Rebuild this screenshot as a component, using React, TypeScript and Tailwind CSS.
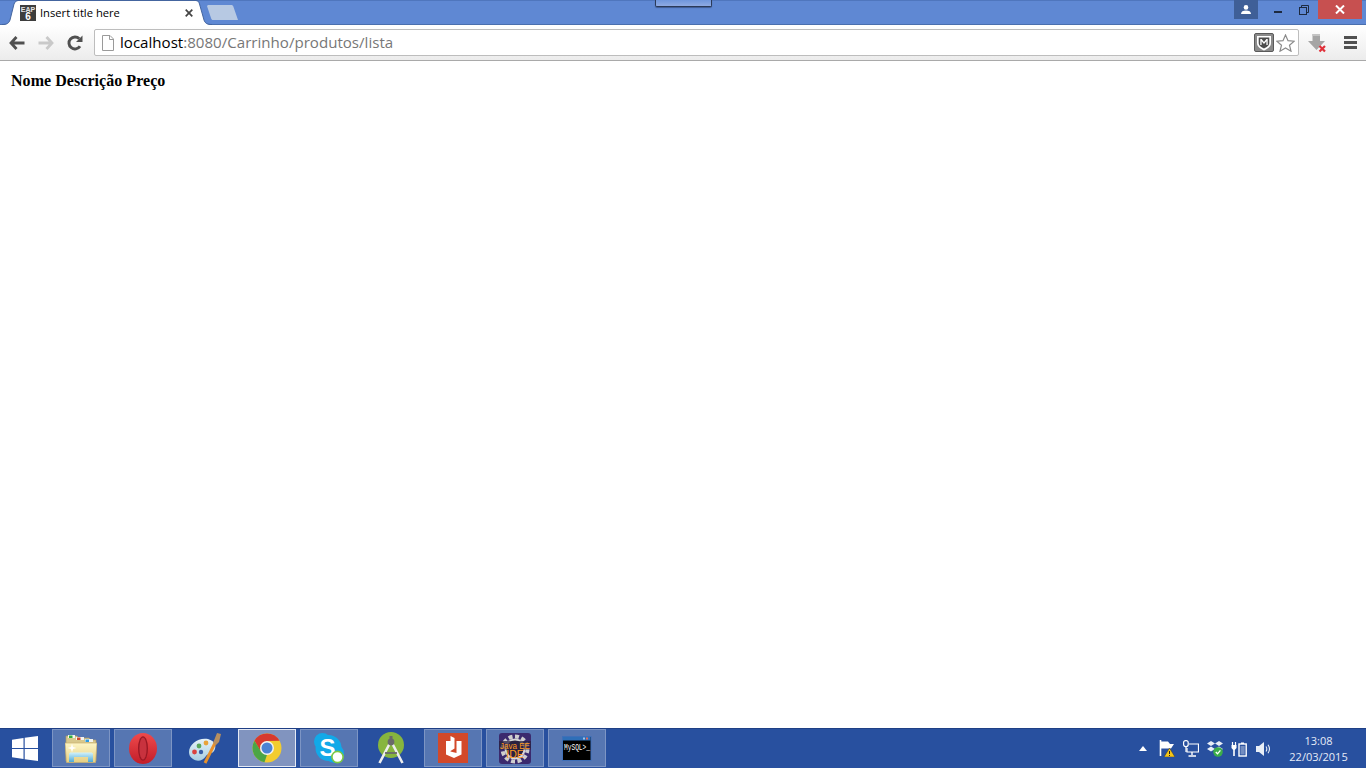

import React from "react";

const ui = { fontFamily: '"Open Sans", "Liberation Sans", sans-serif' };

function TabLeft() {
  return (
    <svg width="18" height="25" viewBox="0 0 18 25" className="shrink-0 block">
      <path d="M2 25 C7 25 9 23 10 20 L14 4 C15 2 16 1 18 1 V25 Z" fill="#ffffff" />
      <path d="M2 24.5 C7 24.5 9 23 10 20 L14 4 C15 2 16 .5 18 .5" fill="none" stroke="#44659f" />
    </svg>
  );
}
function TabRight() {
  return (
    <svg width="16" height="25" viewBox="0 0 16 25" className="shrink-0 block">
      <path d="M0 1 C2 1 3 2 3.5 4 L8 20 C9 23 11 25 16 25 H0 Z" fill="#ffffff" />
      <path d="M0 .5 C2 .5 3 2 3.5 4 L8 20 C9 23 11 24.5 16 24.5" fill="none" stroke="#44659f" />
    </svg>
  );
}
function Favicon() {
  return (
    <svg width="16" height="16" viewBox="0 0 16 16" className="shrink-0 block">
      <rect width="16" height="16" fill="#3d3d3d" />
      <text x="8" y="6.5" fontSize="7" fontWeight="700" fill="#e2e2e2" textAnchor="middle" fontFamily="Liberation Sans, sans-serif">EAP</text>
      <text x="8" y="15.2" fontSize="10" fontWeight="700" fill="#ffffff" textAnchor="middle" fontFamily="Liberation Sans, sans-serif">6</text>
    </svg>
  );
}
function NewTab() {
  return (
    <svg width="31" height="15" viewBox="0 0 31 15" className="shrink-0 block">
      <path d="M1 0 H24 C25.5 0 26 .5 26.5 2 L31 15 H6 C5 15 4.5 14.5 4 13 L0 1 Z" fill="#b7c9e3" />
    </svg>
  );
}
function Back({ color }: { color: string }) {
  return (
    <svg width="16" height="14" viewBox="0 0 16 14" className="block">
      <path d="M7.5 1 L2 7 L7.5 13 M2.5 7 H15.5" fill="none" stroke={color} strokeWidth="2.8" />
    </svg>
  );
}
function Forward({ color }: { color: string }) {
  return (
    <svg width="16" height="14" viewBox="0 0 16 14" className="block">
      <path d="M8.5 1 L14 7 L8.5 13 M13.5 7 H0.5" fill="none" stroke={color} strokeWidth="2.8" />
    </svg>
  );
}
function Reload() {
  return (
    <svg width="16" height="16" viewBox="0 0 16 16" className="block">
      <path d="M13 11.2 A6 6 0 1 1 12.3 3.8" fill="none" stroke="#505050" strokeWidth="2.9" />
      <path d="M9 7 H15.5 V0.5 Z" fill="#505050" />
    </svg>
  );
}
function PageIcon() {
  return (
    <svg width="12" height="16" viewBox="0 0 12 16" className="block">
      <path d="M.5 .5 H8 L11.5 4 V15.5 H.5 Z" fill="#ffffff" stroke="#9a9a9a" />
      <path d="M7.5 .5 V4.5 H11.5" fill="none" stroke="#9a9a9a" />
    </svg>
  );
}
function McAfee() {
  return (
    <svg width="20" height="19" viewBox="0 0 20 19" className="block">
      <rect x=".5" y=".5" width="19" height="18" rx="1.5" fill="#8a8a8a" stroke="#5a5a5a" />
      <path d="M3 3 H17 V10 C17 14 13 16 10 17.5 C7 16 3 14 3 10 Z" fill="#ffffff" />
      <path d="M4.7 4.5 H15.3 V10 C15.3 12.8 12.5 14.2 10 15.6 C7.5 14.2 4.7 12.8 4.7 10 Z" fill="#4d4d4d" />
      <path d="M6.3 12 V6 H7.6 L10 9 L12.4 6 H13.7 V12 H12.4 V8.2 L10 11 L7.6 8.2 V12 Z" fill="#ffffff" />
    </svg>
  );
}
function Star() {
  return (
    <svg width="19" height="18" viewBox="0 0 19 18" className="block">
      <path d="M9.5 1 L12 6.7 L18.2 7.2 L13.5 11.2 L15 17.2 L9.5 14 L4 17.2 L5.5 11.2 L.8 7.2 L7 6.7 Z" fill="#ffffff" stroke="#8a8a8a" strokeWidth="1.2" />
    </svg>
  );
}
function DownloadX() {
  return (
    <svg width="20" height="20" viewBox="0 0 20 20" className="block">
      <path d="M5.5 1 H13 V8 H18 L9.5 17 L1 8 H5.5 Z" fill="#a5a5a5" />
      <path d="M5.5 1 H13 V3 H5.5 Z" fill="#c4c4c4" />
      <path d="M12.5 13 L18 18.5 M18 13 L12.5 18.5" stroke="#e0303a" strokeWidth="2.2" />
    </svg>
  );
}
function Menu() {
  return (
    <div className="flex flex-col gap-[2px] w-[13px]">
      <div className="h-[3px] bg-[#505050]" />
      <div className="h-[3px] bg-[#505050]" />
      <div className="h-[3px] bg-[#505050]" />
    </div>
  );
}

function WinLogo() {
  return (
    <svg width="26" height="25" viewBox="0 0 26 25" className="block">
      <path d="M0 3.7 L11.5 2 V12 H0 Z M12.7 1.8 L26 0 V12 H12.7 Z M0 13 H11.5 V23 L0 21.3 Z M12.7 13 H26 V25 L12.7 23.2 Z" fill="#ffffff" />
    </svg>
  );
}
function FolderIcon() {
  return (
    <svg width="32" height="29" viewBox="0 0 32 29" className="block">
      <defs>
        <linearGradient id="fold" x1="0" y1="0" x2="0" y2="1">
          <stop offset="0" stopColor="#fdf6c6" />
          <stop offset="1" stopColor="#e6cf83" />
        </linearGradient>
        <linearGradient id="arch" x1="0" y1="0" x2="0" y2="1">
          <stop offset="0" stopColor="#d2f2fb" />
          <stop offset="1" stopColor="#4fa9d6" />
        </linearGradient>
      </defs>
      <path d="M1 2 H12 L14 4 H24 L26 6 H31 V27 H1 Z" fill="#d8c88c" stroke="#a9986a" strokeWidth=".7" />
      <rect x="3" y="1" width="7" height="3" fill="#f4f4f0" />
      <rect x="4" y="1.5" width="3.5" height="2.5" fill="#2fae3f" />
      <rect x="11" y="3" width="8" height="3" fill="#f4f4f0" />
      <rect x="12" y="3.5" width="3.5" height="2.5" fill="#d04a2c" />
      <rect x="20" y="5" width="8" height="3" fill="#f4f4f0" />
      <rect x="20.5" y="5.5" width="3.5" height="2.5" fill="#2f9be0" />
      <path d="M0 9 H32 L30.5 28.5 H1.5 Z" fill="url(#fold)" stroke="#c9b070" strokeWidth=".7" />
      <path d="M4 28 V20 C4 19 5 18.5 6 18.5 H26 C27 18.5 28 19 28 20 V28 H23 V23 H9 V28 Z" fill="url(#arch)" />
      <path d="M7 9.5 L8 13 L11.5 14 L8 15 L7 18.5 L6 15 L2.5 14 L6 13 Z" fill="#ffffff" />
    </svg>
  );
}
function OperaIcon() {
  return (
    <svg width="28" height="31" viewBox="0 0 28 31" className="block">
      <defs>
        <linearGradient id="op" x1="0" y1="0" x2="0" y2="1">
          <stop offset="0" stopColor="#ef4a4c" />
          <stop offset="1" stopColor="#c21d29" />
        </linearGradient>
      </defs>
      <ellipse cx="14" cy="15.5" rx="14" ry="15.5" fill="url(#op)" />
      <ellipse cx="14" cy="15.5" rx="5" ry="12.2" fill="#9a1824" />
      <ellipse cx="14" cy="15.5" rx="3.6" ry="11" fill="#c8323e" />
    </svg>
  );
}
function PaintIcon() {
  return (
    <svg width="34" height="32" viewBox="0 0 34 32" className="block">
      <defs>
        <linearGradient id="pal" x1="0" y1="0" x2="0" y2="1">
          <stop offset="0" stopColor="#e6f2f8" />
          <stop offset="1" stopColor="#a9cfe2" />
        </linearGradient>
      </defs>
      <path d="M1 20 C1 12 11 5 20 7 C27 9 29 14 26 19 C24 22 20 21 18 24 C15 29 9 30 5 27 C2 25 1 23 1 20 Z" fill="url(#pal)" />
      <circle cx="6.5" cy="20" r="2.4" fill="#d9433f" />
      <circle cx="11" cy="14" r="2.4" fill="#58a75a" />
      <circle cx="18" cy="11" r="2.4" fill="#e8a33a" />
      <circle cx="13" cy="20" r="2.2" fill="#3a5fa8" />
      <path d="M17 31 L28 9" stroke="#e8912c" strokeWidth="3" />
      <path d="M25 11 L29 1 L33 2 L31 10 L28 13 Z" fill="#b88f5f" />
    </svg>
  );
}
function ChromeIcon() {
  return (
    <svg width="30" height="30" viewBox="0 0 30 30" className="block">
      <circle cx="15" cy="15" r="14.5" fill="#f2cc2f" />
      <path d="M2.44 7.75 A14.5 14.5 0 0 1 27.56 7.75 L15 8 L8.5 12 L8.7 18.6 Z" fill="#d7392f" />
      <path d="M2.44 7.75 L9 18.5 L15 21.8 L12.5 29.3 A14.5 14.5 0 0 1 2.44 7.75 Z" fill="#4ba546" />
      <circle cx="15" cy="15" r="7" fill="#f2f2f2" />
      <circle cx="15" cy="15" r="5.5" fill="#4a83d4" />
    </svg>
  );
}
function SkypeIcon() {
  return (
    <svg width="30" height="31" viewBox="0 0 30 31" className="block">
      <circle cx="8.5" cy="8.5" r="8.5" fill="#12a9e8" />
      <circle cx="20.5" cy="20.5" r="9.5" fill="#12a9e8" />
      <circle cx="14.5" cy="15" r="13" fill="#12a9e8" />
      <text x="13.5" y="23" fontSize="24" fontWeight="700" textAnchor="middle" fill="#ffffff" fontFamily="Liberation Sans, sans-serif">S</text>
      <circle cx="23.5" cy="24" r="5.6" fill="#ffffff" stroke="#7ac943" strokeWidth="1.6" />
    </svg>
  );
}
function AndroidIcon() {
  return (
    <svg width="28" height="32" viewBox="0 0 28 32" className="block">
      <circle cx="14" cy="13" r="13" fill="#87b53e" />
      <path d="M13 11 L2.5 31 M15 11 L25.5 31" stroke="#eeeeee" strokeWidth="2.6" />
      <path d="M8 21 H20" stroke="#6a6a6a" strokeWidth="1.8" />
      <circle cx="14" cy="10" r="3.4" fill="#6a6a6a" />
      <rect x="12.5" y="4" width="3" height="4" fill="#6a6a6a" />
    </svg>
  );
}
function OfficeLensIcon() {
  return (
    <svg width="30" height="30" viewBox="0 0 30 30" className="block">
      <rect width="30" height="30" fill="#d2492a" />
      <path d="M8 8 H12.5 V3 L16.5 5 V15.5 L12.5 18 V18.5 L18.5 20 V8 H23.5 V21.5 L16 25 L8 21.5 Z" fill="#ffffff" />
    </svg>
  );
}
function EclipseIcon() {
  return (
    <svg width="32" height="31" viewBox="0 0 32 31" className="block overflow-visible">
      <rect width="32" height="31" rx="3" fill="#3b2a6e" />
      <circle cx="16" cy="16" r="12.5" fill="none" stroke="#cfcfcf" strokeWidth="4" strokeDasharray="4 2.5" />
      <circle cx="16" cy="16" r="9.5" fill="#2a2240" stroke="#d8d8d8" strokeWidth="2" />
      <rect x="0" y="8" width="32" height="8.5" fill="#2a2240" opacity=".75" />
      <text x="1" y="15.5" fontSize="9.5" textLength="30" lengthAdjust="spacingAndGlyphs" fill="#ff9a1f" fontFamily="Liberation Sans, sans-serif">Java EE</text>
      <text x="16" y="25" fontSize="10.5" textAnchor="middle" fill="#ff9a1f" fontFamily="Liberation Sans, sans-serif">IDE</text>
    </svg>
  );
}
function MysqlIcon() {
  return (
    <svg width="30" height="25" viewBox="0 0 30 25" className="block overflow-visible">
      <rect x=".5" y=".5" width="28.5" height="24" fill="#000000" stroke="#3f6fb8" />
      <rect x="1" y="1" width="27.5" height="3.5" fill="#2f6fb8" />
      <rect x="21" y="1.5" width="2" height="2" fill="#9cc4ea" />
      <rect x="24" y="1.5" width="2" height="2" fill="#e26a5a" />
      <text x="2" y="14" fontSize="9" textLength="26" lengthAdjust="spacingAndGlyphs" fill="#ffffff" fontFamily="Liberation Mono, monospace">MySQL&gt;_</text>
    </svg>
  );
}

function TaskButton({ active, plain, children }: { active?: boolean; plain?: boolean; children: React.ReactNode }) {
  const cls = plain
    ? "w-[58px] h-[38px] flex items-center justify-center"
    : active
      ? "w-[58px] h-[38px] flex items-center justify-center border border-[#e4e9f4] bg-[#8194bf]"
      : "w-[58px] h-[38px] flex items-center justify-center border border-[#7d95c4] bg-[#5676b2]";
  return <div className={cls}>{children}</div>;
}

function TrayArrow() {
  return (
    <svg width="8" height="5" viewBox="0 0 8 5" className="block">
      <path d="M4 0 L8 5 H0 Z" fill="#ffffff" />
    </svg>
  );
}
function TrayFlag() {
  return (
    <svg width="16" height="17" viewBox="0 0 16 17" className="block">
      <path d="M1.5 0 V16" fill="none" stroke="#ffffff" strokeWidth="1.6" />
      <path d="M2 1.5 H9 L11 4 H15 L12 8.5 H2 Z" fill="#ffffff" />
      <path d="M10.5 8 L16 17 H5 Z" fill="#f5c518" stroke="#333" strokeWidth=".5" />
      <path d="M10.5 11 V14 M10.5 15 V16" stroke="#222" strokeWidth="1" />
    </svg>
  );
}
function TrayNetwork() {
  return (
    <svg width="16" height="17" viewBox="0 0 16 17" className="block">
      <path d="M6 4 H15.5 V12 H4 V8" fill="none" stroke="#ffffff" strokeWidth="1.2" />
      <path d="M9 12 V15 M5.5 16 H13" stroke="#ffffff" strokeWidth="1.4" />
      <rect x=".6" y=".6" width="4.6" height="6" rx="2" fill="none" stroke="#ffffff" strokeWidth="1.2" />
      <path d="M3 7 V12" stroke="#ffffff" strokeWidth="1.2" />
    </svg>
  );
}
function TrayDropbox() {
  return (
    <svg width="16" height="17" viewBox="0 0 16 17" className="block">
      <path d="M4 1 L8 3.5 L4 6 L0 3.5 Z M12 1 L16 3.5 L12 6 L8 3.5 Z M4 6.5 L8 9 L4 11.5 L0 9 Z M12 6.5 L16 9 L12 11.5 L8 9 Z" fill="#e8eef7" />
      <circle cx="11" cy="12" r="4.8" fill="#3cae4a" />
      <path d="M8.8 12 L10.5 13.8 L13.4 10.4" fill="none" stroke="#ffffff" strokeWidth="1.3" />
    </svg>
  );
}
function TrayBattery() {
  return (
    <svg width="16" height="16" viewBox="0 0 16 16" className="block">
      <path d="M1.5 1 V4 M4.5 1 V4" stroke="#ffffff" strokeWidth="1.2" />
      <path d="M.5 4 H5.5 V7 L3.8 9 V15 H2.2 V9 L.5 7 Z" fill="#ffffff" />
      <rect x="8" y="3" width="7.2" height="12" fill="none" stroke="#ffffff" strokeWidth="1.4" />
      <rect x="10" y="1.5" width="3" height="1.5" fill="#ffffff" />
      <rect x="9.5" y="5" width="4.2" height="8.5" fill="#ffffff" opacity=".35" />
    </svg>
  );
}
function TraySpeaker() {
  return (
    <svg width="16" height="16" viewBox="0 0 16 16" className="block">
      <path d="M1 5 H4 L9 1 V15 L4 11 H1 Z" fill="#e8eef7" />
      <path d="M11 5.5 C12 7 12 9 11 10.5 M13 3.8 C14.7 6.2 14.7 9.8 13 12.2" fill="none" stroke="#e8eef7" strokeWidth="1.1" />
    </svg>
  );
}

export default function App() {
  return (
    <div className="h-[768px] w-[1366px] flex flex-col overflow-hidden bg-white">
      {/* title bar */}
      <div className="relative h-[25px] shrink-0 bg-[#5f88d3] flex items-stretch border-t border-b border-t-[#4f76bd] border-b-[#4a6fae]">
        <div className="flex items-stretch -my-px">
          <TabLeft />
          <div className="w-[178px] bg-white border-t border-[#44659f] flex items-center">
            <div className="ml-[2px]"><Favicon /></div>
            <span className="ml-1 text-[11.2px] leading-none text-black whitespace-nowrap" style={ui}>Insert title here</span>
            <span className="ml-auto mr-[3px]">
              <svg width="8" height="8" viewBox="0 0 8 8" className="block"><path d="M.7 .7 L7.3 7.3 M7.3 .7 L.7 7.3" stroke="#444" strokeWidth="1.7" /></svg>
            </span>
          </div>
          <TabRight />
          <div className="self-start mt-[5px] -ml-[5px]"><NewTab /></div>
        </div>
        <div className="absolute left-[655px] top-[-1px] w-[57px] h-[7px] bg-gradient-to-b from-[#6f96dc] to-[#8eaae3] border-x border-b border-[#2b3a58] rounded-b-[2px] shadow-[0_1px_1px_rgba(30,45,80,0.5)]" />
        <div className="ml-auto flex items-start -mt-px">
          <div className="w-[24px] h-[19px] bg-[#3f5f97] flex items-center justify-center">
            <svg width="10" height="9" viewBox="0 0 10 9" className="block"><circle cx="5" cy="2.4" r="2.3" fill="#fff" /><path d="M0 9 C0 6.5 2 5.5 5 5.5 C8 5.5 10 6.5 10 9 Z" fill="#fff" /></svg>
          </div>
          <div className="w-[7px]" />
          <div className="w-[26px] h-[19px] flex items-center justify-center">
            <div className="w-[8px] h-[2px] bg-[#1d2a40] mt-[5px]" />
          </div>
          <div className="w-[26px] h-[19px] flex items-center justify-center">
            <svg width="10" height="10" viewBox="0 0 10 10" className="block"><path d="M2.5 2.5 V.5 H9.5 V7.5 H7.5" fill="none" stroke="#1d2a40" /><rect x=".5" y="2.5" width="7" height="7" fill="none" stroke="#1d2a40" /></svg>
          </div>
          <div className="w-px" />
          <div className="w-[44px] h-[19px] bg-[#c75050] flex items-center justify-center">
            <svg width="10" height="9" viewBox="0 0 10 9" className="block"><path d="M1 .5 L9 8.5 M9 .5 L1 8.5" stroke="#fff" strokeWidth="2" /></svg>
          </div>
          <div className="w-[4px]" />
        </div>
      </div>

      {/* toolbar */}
      <div className="h-[36px] shrink-0 bg-gradient-to-b from-[#ffffff] to-[#ececec] border-b border-[#a9a9a9] flex items-center">
        <div className="w-[94px] flex items-center shrink-0 pl-[9px]">
          <div className="w-[29px]"><Back color="#505050" /></div>
          <div className="w-[29px]"><Forward color="#c9c9c9" /></div>
          <div><Reload /></div>
        </div>
        <div className="w-[1205px] h-[27px] shrink-0 bg-white border border-[#bdbdbd] rounded-[2px] flex items-center pl-[7px] pr-[3px]">
          <PageIcon />
          <span className="ml-[6px] text-[15.1px] leading-none whitespace-nowrap text-[#777]" style={ui}>
            <span className="text-black">localhost</span>:8080/Carrinho/produtos/lista
          </span>
          <div className="ml-auto flex items-center gap-[2px]">
            <McAfee />
            <Star />
          </div>
        </div>
        <div className="ml-[8px]"><DownloadX /></div>
        <div className="ml-[17px]"><Menu /></div>
      </div>

      {/* page */}
      <div className="flex-1 bg-white">
        <table className="m-2 border-separate border-spacing-[2px] text-[16px] leading-[18px] text-black" style={{ fontFamily: '"Liberation Serif", serif' }}>
          <thead>
            <tr>
              <th className="p-0 pl-px pt-px font-bold text-left tracking-[0.05px]">Nome Descrição Preço</th>
            </tr>
          </thead>
        </table>
      </div>

      {/* taskbar */}
      <div className="h-[40px] shrink-0 bg-[#28509f] border-t border-[#1f3f85] flex items-start">
        <div className="w-[50px] mr-[2px] h-[38px] flex items-center justify-center shrink-0"><WinLogo /></div>
        <div className="flex gap-[4px]">
          <TaskButton><FolderIcon /></TaskButton>
          <TaskButton><OperaIcon /></TaskButton>
          <TaskButton plain><PaintIcon /></TaskButton>
          <TaskButton active><ChromeIcon /></TaskButton>
          <TaskButton><SkypeIcon /></TaskButton>
          <TaskButton plain><AndroidIcon /></TaskButton>
          <TaskButton><OfficeLensIcon /></TaskButton>
          <TaskButton><EclipseIcon /></TaskButton>
          <TaskButton><MysqlIcon /></TaskButton>
        </div>
        <div className="ml-auto h-[39px] flex items-center">
          <div className="flex items-center"><TrayArrow /></div>
          <div className="ml-[12px]"><TrayFlag /></div>
          <div className="ml-[8px]"><TrayNetwork /></div>
          <div className="ml-[8px]"><TrayDropbox /></div>
          <div className="ml-[8px]"><TrayBattery /></div>
          <div className="ml-[8px]"><TraySpeaker /></div>
          <div className="w-[95px] text-center text-[11px] leading-[16px] text-[#e6ecf7]" style={ui}>
            <div>13:08</div>
            <div>22/03/2015</div>
          </div>
        </div>
      </div>
    </div>
  );
}
